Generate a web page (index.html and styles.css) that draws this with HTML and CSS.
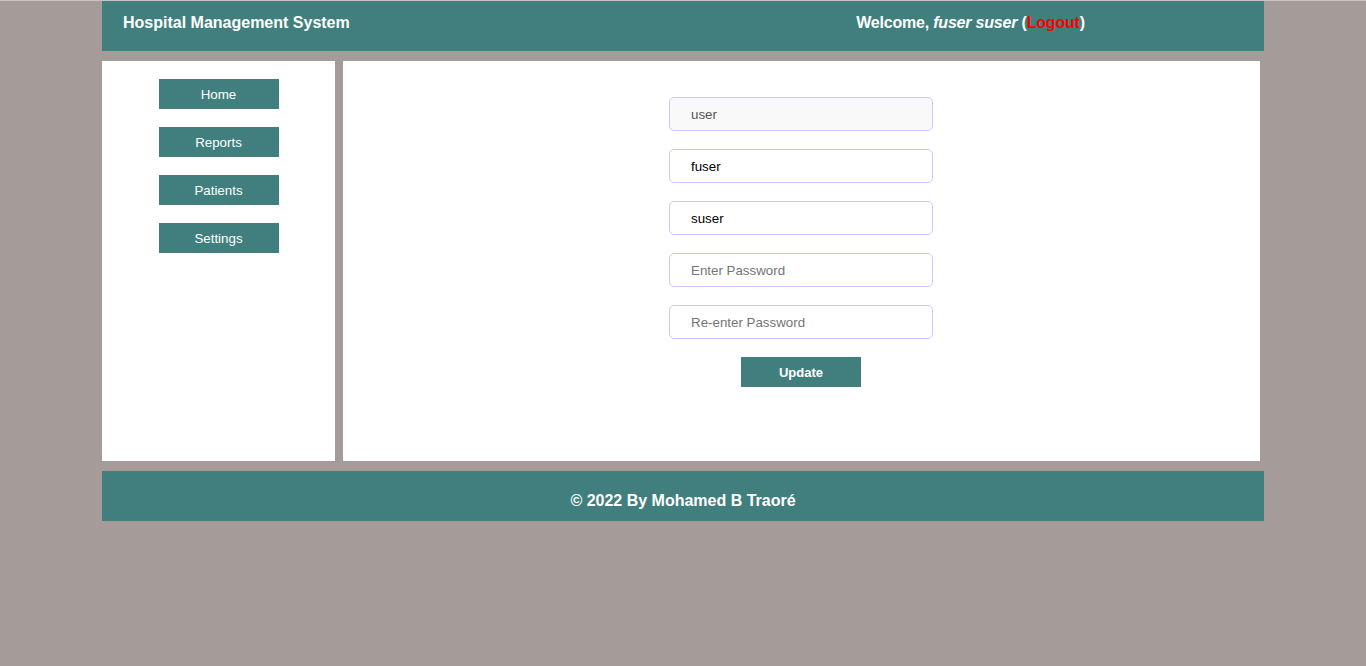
FILE: index.html
```html
<!DOCTYPE html>
<html>
<head>
<meta charset="utf-8">
<link rel="stylesheet" href="styles.css">
</head>
<body>
<div class="page">
  <header class="top">
    <div class="brand">Hospital Management System</div>
    <div class="welcome">Welcome, <em>fuser suser</em> (<a href="#" class="logout">Logout</a>)</div>
  </header>
  <div class="middle">
    <nav class="side">
      <a href="#" class="navbtn">Home</a>
      <a href="#" class="navbtn">Reports</a>
      <a href="#" class="navbtn">Patients</a>
      <a href="#" class="navbtn">Settings</a>
    </nav>
    <main class="content">
      <form class="form">
        <input class="field readonly" type="text" value="user" readonly>
        <input class="field" type="text" value="fuser">
        <input class="field" type="text" value="suser">
        <input class="field" type="password" placeholder="Enter Password">
        <input class="field" type="password" placeholder="Re-enter Password">
        <button type="button" class="btn">Update</button>
      </form>
    </main>
  </div>
  <footer class="foot">© 2022 By Mohamed B Traoré</footer>
</div>
</body>
</html>
```
FILE: styles.css
```css
* { box-sizing: border-box; }
html, body { margin: 0; padding: 0; }
body {
  background: #a59c9a;
  font-family: "Liberation Sans", Arial, sans-serif;
  border-top: 1px solid #c9c4c3;
  height: 666px;
  overflow: hidden;
}
.page {
  width: 1162px;
  margin: 0 auto;
}
.top {
  height: 50px;
  background: #417f7e;
  color: #fff;
  display: flex;
  font-weight: bold;
  font-size: 16px;
}
.brand {
  flex: 1;
  padding: 13px 0 0 21px;
}
.welcome {
  flex: 1;
  text-align: center;
  padding: 13px 11px 0 0;
  letter-spacing: -0.2px;
}
.logout {
  color: #ff0000;
  text-decoration: none;
}
.middle {
  display: flex;
  gap: 8px;
  margin-top: 10px;
  width: 1158px;
}
.side {
  width: 233px;
  height: 400px;
  background: #fff;
  display: flex;
  flex-direction: column;
  align-items: center;
  gap: 18px;
  padding-top: 18px;
}
.navbtn {
  display: block;
  width: 120px;
  height: 30px;
  line-height: 32px;
  background: #417f7e;
  color: #fff;
  text-align: center;
  text-decoration: none;
  font-size: 13.333px;
}
.content {
  flex: 1;
  height: 400px;
  background: #fff;
  padding: 36px 1px 0 0;
}
.form {
  display: flex;
  flex-direction: column;
  align-items: center;
  gap: 18px;
}
.field {
  width: 264px;
  height: 34px;
  border: 1px solid #cbc8fb;
  border-radius: 5px;
  padding: 0 0 0 21px;
  font-family: "Liberation Sans", Arial, sans-serif;
  font-size: 13.333px;
  color: #000;
  background: #fff;
  outline: none;
}
.field::placeholder { color: #757575; }
.field.readonly {
  background: #f9f9f9;
  color: #555;
}
.btn {
  width: 120px;
  height: 30px;
  border: none;
  background: #417f7e;
  color: #fff;
  font-family: "Liberation Sans", Arial, sans-serif;
  font-size: 13px;
  font-weight: bold;
}
.foot {
  margin-top: 10px;
  height: 50px;
  background: #417f7e;
  color: #fff;
  font-weight: bold;
  font-size: 16px;
  text-align: center;
  padding-top: 21px;
}
```
